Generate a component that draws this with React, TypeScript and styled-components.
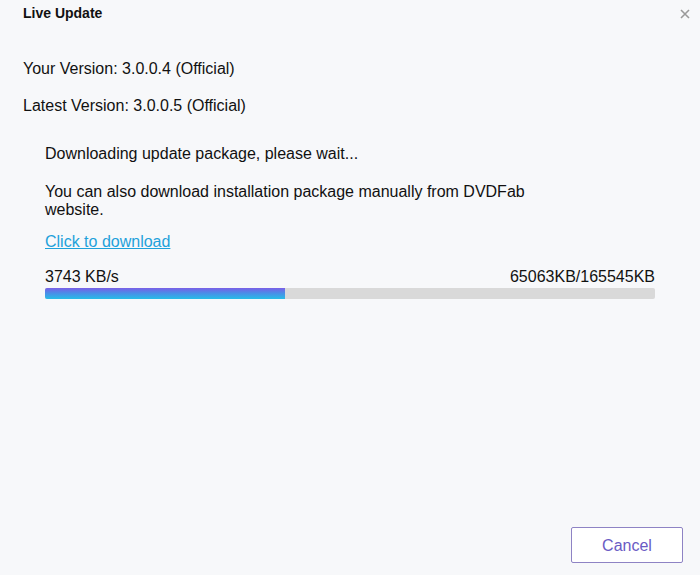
import styled, { createGlobalStyle } from "styled-components";

// ========================================================================================= //
// [ GLOBAL ] ============================================================================== //
// ========================================================================================= //

const GlobalStyle = createGlobalStyle`
  html, body {
    margin: 0;
    padding: 0;
    background: #f7f8fa;
  }
  body {
    font-family: "Liberation Sans", Arial, sans-serif;
    color: #111;
  }
`;

// ========================================================================================= //
// [ STYLED COMPONENTS ] =================================================================== //
// ========================================================================================= //

const Dialog = styled.div`
  width: 700px;
  height: 575px;
  display: flex;
  flex-direction: column;
  background: #f7f8fa;
  box-sizing: border-box;
`;

const Header = styled.header`
  display: flex;
  justify-content: space-between;
  align-items: center;
  height: 26px;
  padding: 0 8px 0 23px;
`;

const Title = styled.h1`
  margin: 0;
  font-size: 14px;
  font-weight: 700;
  line-height: 26px;
  color: #111;
`;

const CloseButton = styled.button`
  display: flex;
  align-items: center;
  justify-content: center;
  width: 14px;
  height: 14px;
  margin-top: 1px;
  padding: 0;
  border: none;
  background: transparent;
  cursor: pointer;
`;

const Body = styled.main`
  flex: 1;
  display: flex;
  flex-direction: column;
  padding: 34px 45px 0 23px;
`;

const VersionLine = styled.p`
  margin: 0 0 19px;
  font-size: 16px;
  line-height: 18px;
`;

const Section = styled.section`
  display: flex;
  flex-direction: column;
  margin-top: 11px;
  padding-left: 22px;
`;

const Text = styled.p<{ $gap?: number }>`
  margin: 0 0 ${(p) => p.$gap ?? 0}px;
  max-width: 490px;
  font-size: 16px;
  line-height: 18px;
`;

const Link = styled.a`
  align-self: flex-start;
  font-size: 16px;
  line-height: 18px;
  color: #1ea1da;
  text-decoration: underline;
  margin-bottom: 17px;
  cursor: pointer;
`;

const ProgressLabels = styled.div`
  display: flex;
  justify-content: space-between;
  font-size: 16px;
  line-height: 18px;
  margin-bottom: 2px;
`;

const Track = styled.div`
  height: 11px;
  background: #d9d9d9;
  border-radius: 2px;
  overflow: hidden;
`;

const Fill = styled.div`
  height: 100%;
  background: linear-gradient(180deg, #7a5fe6 0%, #4b8ce8 45%, #27bde6 100%);
`;

const Footer = styled.footer`
  display: flex;
  justify-content: flex-end;
  padding: 0 17px 12px 0;
`;

const CancelButton = styled.button`
  width: 112px;
  height: 36px;
  border: 1px solid #8e83c4;
  border-radius: 2px;
  background: #ffffff;
  color: #6a5bc4;
  font-family: "Liberation Sans", Arial, sans-serif;
  font-size: 16px;
  padding-top: 2px;
  cursor: pointer;
`;

// ========================================================================================= //
// [ EXPORTED COMPONENT ] ================================================================== //
// ========================================================================================= //

const downloaded = 65063;
const total = 165545;

export default function App() {
  const percent = (downloaded / total) * 100;

  return (
    <>
      <GlobalStyle />
      <Dialog>
        <Header>
          <Title>Live Update</Title>
          <CloseButton aria-label="Close">
            <svg width="10" height="10" viewBox="0 0 10 10">
              <path d="M1 1L9 9M9 1L1 9" stroke="#9a9a9a" strokeWidth="1.6" />
            </svg>
          </CloseButton>
        </Header>

        <Body>
          <VersionLine>Your Version: 3.0.0.4 (Official)</VersionLine>
          <VersionLine>Latest Version: 3.0.0.5 (Official)</VersionLine>

          <Section>
            <Text $gap={20}>Downloading update package, please wait...</Text>
            <Text $gap={14}>
              You can also download installation package manually from DVDFab website.
            </Text>
            <Link>Click to download</Link>
            <ProgressLabels>
              <span>3743 KB/s</span>
              <span>
                {downloaded}KB/{total}KB
              </span>
            </ProgressLabels>
            <Track>
              <Fill style={{ width: `${percent}%` }} />
            </Track>
          </Section>
        </Body>

        <Footer>
          <CancelButton>Cancel</CancelButton>
        </Footer>
      </Dialog>
    </>
  );
}
